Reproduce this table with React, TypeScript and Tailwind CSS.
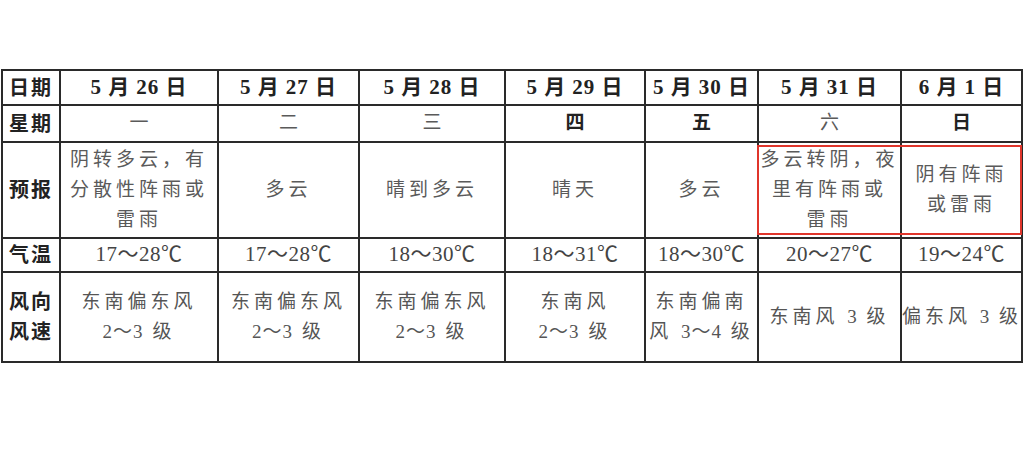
import React from "react";

const serif = "font-['Liberation_Serif','Noto_Sans_CJK_SC',serif]";

const dates = ["5 月 26 日", "5 月 27 日", "5 月 28 日", "5 月 29 日", "5 月 30 日", "5 月 31 日", "6 月 1 日"];

const weekdays: { text: string; bold?: boolean }[] = [
  { text: "一" },
  { text: "二" },
  { text: "三" },
  { text: "四", bold: true },
  { text: "五", bold: true },
  { text: "六" },
  { text: "日", bold: true },
];

const forecast: string[][] = [
  ["阴转多云，有", "分散性阵雨或", "雷雨"],
  ["多云"],
  ["晴到多云"],
  ["晴天"],
  ["多云"],
  ["多云转阴，夜", "里有阵雨或", "雷雨"],
  ["阴有阵雨", "或雷雨"],
];

const temps = ["17～28℃", "17～28℃", "18～30℃", "18～31℃", "18～30℃", "20～27℃", "19～24℃"];

const wind: string[][] = [
  ["东南偏东风", "2～3 级"],
  ["东南偏东风", "2～3 级"],
  ["东南偏东风", "2～3 级"],
  ["东南风", "2～3 级"],
  ["东南偏南", "风 3～4 级"],
  ["东南风 3 级"],
  ["偏东风 3 级"],
];

const widths = ["w-[58px]", "w-[158px]", "w-[141px]", "w-[146px]", "w-[140px]", "w-[113px]", "w-[143px]", "w-[121px]"];

const cell = "border-2 border-[#2a2a2a] p-0 text-center align-middle";
const label = `${cell} text-[20px] font-bold text-[#222] tracking-[2px] leading-[30px]`;
const body = `${cell} text-[19px] text-[#5a5a5a] tracking-[4px] leading-[30px] whitespace-nowrap`;

// digits and the tilde sit closer together than the Chinese characters
function Line({ text }: { text: string }) {
  const parts = text.split(/([0-9～]+)/);
  return (
    <div>
      {parts.map((p, i) =>
        /[0-9～]/.test(p) ? (
          <span key={i} className="tracking-[1px]">
            {p}
          </span>
        ) : (
          <span key={i}>{p}</span>
        )
      )}
    </div>
  );
}

export default function App() {
  return (
    <div className={`min-h-[461px] bg-white ${serif}`}>
      <div className="relative pl-[1px] pt-[69px]">
        <table className="w-[1021px] table-fixed border-collapse">
          <colgroup>
            {widths.map((w, i) => (
              <col key={i} className={w} />
            ))}
          </colgroup>
          <tbody>
            <tr className="h-[35px]">
              <td className={label}>日期</td>
              {dates.map((d) => (
                <td key={d} className={`${cell} text-[21px] font-bold text-[#222] tracking-[1px]`}>
                  {d}
                </td>
              ))}
            </tr>
            <tr className="h-[37px]">
              <td className={label}>星期</td>
              {weekdays.map((w) => (
                <td
                  key={w.text}
                  className={`${cell} text-[19px] ${w.bold ? "font-bold text-[#222]" : "text-[#5a5a5a]"}`}
                >
                  {w.text}
                </td>
              ))}
            </tr>
            <tr className="h-[96px]">
              <td className={label}>预报</td>
              {forecast.map((lines, i) => (
                <td key={i} className={body}>
                  {lines.map((l, j) => (
                    <div key={j}>{l}</div>
                  ))}
                </td>
              ))}
            </tr>
            <tr className="h-[33px]">
              <td className={label}>气温</td>
              {temps.map((t, i) => (
                <td key={i} className={`${cell} text-[21px] text-[#444] tracking-[0.5px]`}>
                  {t}
                </td>
              ))}
            </tr>
            <tr className="h-[90px]">
              <td className={label}>
                <div>风向</div>
                <div>风速</div>
              </td>
              {wind.map((lines, i) => (
                <td key={i} className={`${body} text-[#555]`}>
                  {lines.map((l, j) => (
                    <Line key={j} text={l} />
                  ))}
                </td>
              ))}
            </tr>
          </tbody>
        </table>
        {/* highlight box over the last two forecasts */}
        <div className="pointer-events-none absolute left-[757px] top-[145px] h-[90px] w-[265px] border-2 border-[#e0352b]" />
      </div>
    </div>
  );
}
